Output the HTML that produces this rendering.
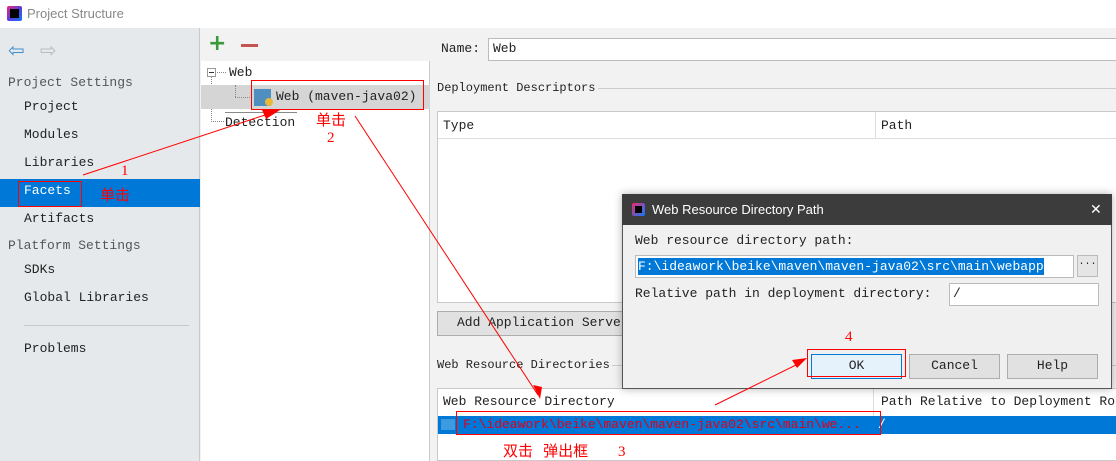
<!DOCTYPE html>
<html><head><meta charset="utf-8"><style>
*{margin:0;padding:0;box-sizing:border-box}
body{width:1116px;height:461px;overflow:hidden;position:relative;background:#f2f2f2;font-family:"Liberation Mono","DejaVu Sans Mono",monospace;font-size:13px;color:#222}
.a{position:absolute;white-space:nowrap}
.s{font-family:"Liberation Sans","Noto Sans CJK SC",sans-serif}
.cn{font-family:"Noto Sans CJK SC","WenQuanYi Zen Hei",sans-serif;color:#f00;font-size:15px}
</style></head><body>
<div class="a" style="left:0;top:0;width:1116px;height:28px;background:#fff"></div>
<div class="a" style="left:7px;top:6px;width:15px;height:15px;background:linear-gradient(135deg,#f0266f,#5f3bdc,#087cfa);border-radius:2px"></div>
<div class="a" style="left:10px;top:9px;width:9px;height:9px;background:#000"></div>
<div class="a s" style="left:27px;top:6px;font-size:13px;color:#888">Project Structure</div>
<div class="a" style="left:0;top:28px;width:200px;height:433px;background:#e6e9ec;border-right:1px solid #c9c9c9"></div>
<div class="a" style="left:8px;top:38px;color:#3f8fcf;font-size:20px;font-family:'DejaVu Sans'">⇦</div>
<div class="a" style="left:40px;top:38px;color:#bbb;font-size:20px;font-family:'DejaVu Sans'">⇨</div>
<div class="a" style="left:8px;top:75px;color:#555">Project Settings</div>
<div class="a" style="left:24px;top:99px">Project</div>
<div class="a" style="left:24px;top:127px">Modules</div>
<div class="a" style="left:24px;top:155px">Libraries</div>
<div class="a" style="left:0;top:179px;width:200px;height:28px;background:#0078d7"></div>
<div class="a" style="left:24px;top:183px;color:#fff">Facets</div>
<div class="a" style="left:24px;top:211px">Artifacts</div>
<div class="a" style="left:8px;top:238px;color:#555">Platform Settings</div>
<div class="a" style="left:24px;top:262px">SDKs</div>
<div class="a" style="left:24px;top:290px">Global Libraries</div>
<div class="a" style="left:24px;top:325px;width:165px;height:1px;background:#c8c8c8"></div>
<div class="a" style="left:24px;top:341px">Problems</div>
<div class="a" style="left:201px;top:28px;width:229px;height:33px;background:#f2f2f2"></div>
<div class="a" style="left:201px;top:61px;width:229px;height:400px;background:#fff;border-right:1px solid #c9c9c9"></div>
<div class="a" style="left:208px;top:31px;color:#3a9a3a;font-size:22px;font-family:'DejaVu Sans';font-weight:bold">+</div>
<div class="a" style="left:241px;top:44px;width:17px;height:3px;background:#c75450"></div>
<div class="a" style="left:207px;top:68px;width:9px;height:9px;border:1px solid #999;background:#fff"></div>
<div class="a" style="left:209px;top:72px;width:5px;height:1px;background:#333"></div>
<div class="a" style="left:211px;top:77px;width:0;height:45px;border-left:1px dotted #888"></div>
<div class="a" style="left:217px;top:72px;width:9px;border-top:1px dotted #888"></div>
<div class="a" style="left:211px;top:121px;width:13px;border-top:1px dotted #888"></div>
<div class="a" style="left:229px;top:65px">Web</div>
<div class="a" style="left:201px;top:85px;width:229px;height:24px;background:#d5d5d5"></div>
<div class="a" style="left:235px;top:85px;width:0;height:12px;border-left:1px dotted #888"></div>
<div class="a" style="left:235px;top:97px;width:15px;border-top:1px dotted #888"></div>
<div class="a" style="left:254px;top:89px;width:17px;height:17px;background:#4e8fc0"></div>
<div class="a" style="left:265px;top:98px;width:8px;height:8px;background:#e8b93a;border-radius:50%"></div>
<div class="a" style="left:276px;top:89px">Web (maven-java02)</div>
<div class="a" style="left:225px;top:115px">Detection</div>
<div class="a" style="left:225px;top:112px;width:72px;height:1px;background:#888"></div>
<div class="a" style="left:441px;top:41px">Name:</div>
<div class="a" style="left:488px;top:38px;width:630px;height:23px;background:#fff;border:1px solid #bbb"></div>
<div class="a" style="left:493px;top:41px">Web</div>
<div class="a" style="left:437px;top:81px;font-size:12px">Deployment Descriptors</div>
<div class="a" style="left:598px;top:88px;width:518px;height:1px;background:#ccc"></div>
<div class="a" style="left:437px;top:111px;width:680px;height:192px;background:#fff;border:1px solid #c9c9c9"></div>
<div class="a" style="left:438px;top:112px;width:679px;height:27px;background:#fff;border-bottom:1px solid #ddd"></div>
<div class="a" style="left:875px;top:112px;width:1px;height:27px;background:#ddd"></div>
<div class="a" style="left:443px;top:118px">Type</div>
<div class="a" style="left:881px;top:118px">Path</div>
<div class="a" style="left:437px;top:311px;width:200px;height:25px;background:#e1e1e1;border:1px solid #adadad"></div>
<div class="a" style="left:457px;top:315px">Add Application Serve</div>
<div class="a" style="left:437px;top:358px;font-size:12px">Web Resource Directories</div>
<div class="a" style="left:612px;top:365px;width:504px;height:1px;background:#ccc"></div>
<div class="a" style="left:437px;top:388px;width:680px;height:73px;background:#fff;border:1px solid #c9c9c9"></div>
<div class="a" style="left:873px;top:389px;width:1px;height:27px;background:#ddd"></div>
<div class="a" style="left:443px;top:394px">Web Resource Directory</div>
<div class="a" style="left:881px;top:394px">Path Relative to Deployment Ro</div>
<div class="a" style="left:438px;top:416px;width:678px;height:18px;background:#0078d7"></div>
<div class="a" style="left:441px;top:419px;width:14px;height:11px;background:#3b9ae0"></div>
<div class="a" style="left:463px;top:417px;color:#e0001a">F:\ideawork\beike\maven\maven-java02\src\main\we...</div>
<div class="a" style="left:878px;top:417px;color:#fff">/</div>
<div class="a" style="left:622px;top:194px;width:490px;height:195px;background:#f0f0f0;border:1px solid #555;box-shadow:0 0 8px rgba(0,0,0,.3)"></div>
<div class="a" style="left:622px;top:194px;width:490px;height:31px;background:#3c3c3c"></div>
<div class="a" style="left:632px;top:203px;width:13px;height:13px;background:linear-gradient(135deg,#f0266f,#087cfa);border-radius:2px"></div>
<div class="a" style="left:635px;top:206px;width:7px;height:7px;background:#000"></div>
<div class="a s" style="left:652px;top:202px;color:#fff;font-size:13px">Web Resource Directory Path</div>
<div class="a s" style="left:1090px;top:201px;color:#fff;font-size:14px">✕</div>
<div class="a" style="left:635px;top:233px">Web resource directory path:</div>
<div class="a" style="left:635px;top:255px;width:439px;height:23px;background:#fff;border:1px solid #bbb"></div>
<div class="a" style="left:638px;top:258px;height:17px;background:#0078d7;color:#fff;line-height:17px">F:\ideawork\beike\maven\maven-java02\src\main\webapp</div>
<div class="a" style="left:1077px;top:255px;width:21px;height:22px;background:#e5e5e5;border:1px solid #bbb;text-align:center;font-size:10px;line-height:18px">···</div>
<div class="a" style="left:635px;top:286px">Relative path in deployment directory:</div>
<div class="a" style="left:949px;top:283px;width:150px;height:23px;background:#fff;border:1px solid #bbb"></div>
<div class="a" style="left:953px;top:286px">/</div>
<div class="a" style="left:811px;top:354px;width:91px;height:25px;background:#e5f1fb;border:1px solid #0078d7;text-align:center;line-height:22px">OK</div>
<div class="a" style="left:909px;top:354px;width:91px;height:25px;background:#e1e1e1;border:1px solid #adadad;text-align:center;line-height:22px">Cancel</div>
<div class="a" style="left:1007px;top:354px;width:91px;height:25px;background:#e1e1e1;border:1px solid #adadad;text-align:center;line-height:22px">Help</div>
<svg class="a" style="left:0;top:0" width="1116" height="461">
<g fill="none" stroke="#f00" stroke-width="1">
<rect x="251.5" y="80.5" width="172" height="29"/>
<rect x="18.5" y="181.5" width="63" height="25"/>
<rect x="456.5" y="411.5" width="424" height="23"/>
<rect x="807.5" y="349.5" width="98" height="27"/>
<line x1="83" y1="175" x2="268" y2="114"/>
<line x1="355" y1="116" x2="538" y2="395"/>
<line x1="715" y1="405" x2="800" y2="363"/>
</g>
<g fill="#f00">
<polygon points="280,110 262,110 266,119"/>
<polygon points="540,399 533,385 542,387"/>
<polygon points="807,358 792,360 797,368"/>
</g>
<g fill="#f00" font-family="Liberation Serif,serif" font-size="15">
<text x="121" y="175">1</text><text x="327" y="142">2</text>
<text x="618" y="456">3</text><text x="845" y="341">4</text></g>
</svg>
<div class="a cn" style="left:100px;top:184px">单击</div>
<div class="a cn" style="left:316px;top:109px">单击</div>
<div class="a cn" style="left:503px;top:440px">双击&nbsp;&nbsp;&nbsp;弹出框</div>
</body></html>
